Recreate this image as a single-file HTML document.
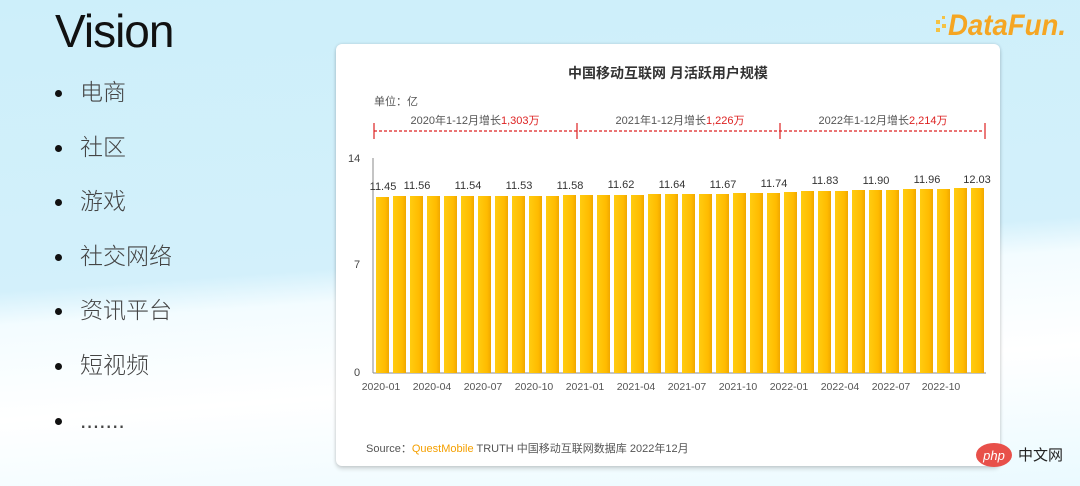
<!DOCTYPE html>
<html><head><meta charset="utf-8"><style>
body{margin:0;width:1080px;height:486px;overflow:hidden;font-family:"Liberation Sans","Noto Sans CJK SC",sans-serif;
background:linear-gradient(176deg,#cdeffa 0%,#d3f0fb 52%,#f3fcff 58%,#ffffff 75%,#eafaff 100%);position:relative}
.t{position:absolute;left:55px;top:4px;font-size:46px;color:#111;letter-spacing:-1px}
ul{position:absolute;left:50px;top:70px;margin:0;padding:0;list-style:none}
li{font-size:23px;color:#444;height:54.6px;line-height:44px;position:relative;padding-left:30px;font-weight:300}
li:before{content:"";position:absolute;left:5px;top:20px;width:7px;height:7px;border-radius:50%;background:#111}
.card{position:absolute;left:336px;top:44px;width:664px;height:422px;background:#fff;box-shadow:0 3px 4px rgba(0,0,0,.14),0 0 3px rgba(0,0,0,.14);border-radius:6px}
</style></head><body>
<div class="t">Vision</div>
<ul><li>电商</li><li>社区</li><li>游戏</li><li>社交网络</li><li>资讯平台</li><li>短视频</li><li>.......</li></ul>
<div class="card"></div>
<svg style="position:absolute;left:0;top:0" width="1080" height="486" font-family="Liberation Sans,Noto Sans CJK SC,sans-serif">
<text x="668" y="78" font-size="14" font-weight="bold" fill="#333" text-anchor="middle">中国移动互联网 月活跃用户规模</text>
<text x="374" y="105" font-size="11" fill="#555">单位：亿</text>
<g font-size="11" fill="#555" text-anchor="middle">
<text x="475" y="124">2020年1-12月增长<tspan fill="#d22">1,303万</tspan></text>
<text x="680" y="124">2021年1-12月增长<tspan fill="#d22">1,226万</tspan></text>
<text x="883" y="124">2022年1-12月增长<tspan fill="#d22">2,214万</tspan></text></g>
<g stroke="#d22" stroke-width="1.2"><line x1="374" y1="131" x2="984" y2="131" stroke-dasharray="3,2"/>
<line x1="374" y1="123" x2="374" y2="139"/><line x1="577" y1="123" x2="577" y2="139"/><line x1="780" y1="123" x2="780" y2="139"/><line x1="985" y1="123" x2="985" y2="139"/></g>
<g font-size="11" fill="#444"><text x="348" y="162">14</text><text x="354" y="268">7</text><text x="354" y="376">0</text></g>
<line x1="373" y1="158" x2="373" y2="373" stroke="#888"/><line x1="373" y1="373" x2="986" y2="373" stroke="#888"/>
<defs><linearGradient id="g" x1="0" x2="1"><stop offset="0" stop-color="#ffcc10"/><stop offset=".7" stop-color="#ffbb00"/><stop offset="1" stop-color="#f0a800"/></linearGradient></defs>
<g fill="url(#g)">
<rect x="376" y="197" width="13" height="176"/><rect x="393" y="196" width="13" height="177"/><rect x="410" y="196" width="13" height="177"/><rect x="427" y="196" width="13" height="177"/><rect x="444" y="196" width="13" height="177"/><rect x="461" y="196" width="13" height="177"/><rect x="478" y="196" width="13" height="177"/><rect x="495" y="196" width="13" height="177"/><rect x="512" y="196" width="13" height="177"/><rect x="529" y="196" width="13" height="177"/><rect x="546" y="196" width="13" height="177"/><rect x="563" y="195" width="13" height="178"/>
<rect x="580" y="195" width="13" height="178"/><rect x="597" y="195" width="13" height="178"/><rect x="614" y="195" width="13" height="178"/><rect x="631" y="195" width="13" height="178"/><rect x="648" y="194" width="13" height="179"/><rect x="665" y="194" width="13" height="179"/><rect x="682" y="194" width="13" height="179"/><rect x="699" y="194" width="13" height="179"/><rect x="716" y="194" width="13" height="179"/><rect x="733" y="193" width="13" height="180"/><rect x="750" y="193" width="13" height="180"/><rect x="767" y="193" width="13" height="180"/>
<rect x="784" y="192" width="13" height="181"/><rect x="801" y="191" width="13" height="182"/><rect x="818" y="191" width="13" height="182"/><rect x="835" y="191" width="13" height="182"/><rect x="852" y="190" width="13" height="183"/><rect x="869" y="190" width="13" height="183"/><rect x="886" y="190" width="13" height="183"/><rect x="903" y="189" width="13" height="184"/><rect x="920" y="189" width="13" height="184"/><rect x="937" y="189" width="13" height="184"/><rect x="954" y="188" width="13" height="185"/><rect x="971" y="188" width="13" height="185"/></g>
<g font-size="11" fill="#333" text-anchor="middle">
<text x="383" y="190">11.45</text><text x="417" y="189">11.56</text><text x="468" y="189">11.54</text><text x="519" y="189">11.53</text><text x="570" y="189">11.58</text><text x="621" y="188">11.62</text><text x="672" y="188">11.64</text><text x="723" y="188">11.67</text><text x="774" y="187">11.74</text><text x="825" y="184">11.83</text><text x="876" y="184">11.90</text><text x="927" y="183">11.96</text><text x="977" y="183">12.03</text></g>
<g font-size="10.5" fill="#555" text-anchor="middle">
<text x="381" y="390">2020-01</text><text x="432" y="390">2020-04</text><text x="483" y="390">2020-07</text><text x="534" y="390">2020-10</text><text x="585" y="390">2021-01</text><text x="636" y="390">2021-04</text><text x="687" y="390">2021-07</text><text x="738" y="390">2021-10</text><text x="789" y="390">2022-01</text><text x="840" y="390">2022-04</text><text x="891" y="390">2022-07</text><text x="941" y="390">2022-10</text></g>
<text x="366" y="452" font-size="11" fill="#555">Source：<tspan fill="#f5a000">QuestMobile</tspan> TRUTH 中国移动互联网数据库 2022年12月</text>
<text x="948" y="35" font-size="30" font-weight="bold" font-style="italic" fill="#f5a623" textLength="118" lengthAdjust="spacingAndGlyphs">DataFun.</text>
<g fill="#f5c242"><rect x="936" y="20" width="4" height="4"/><rect x="942" y="24" width="4" height="4"/><rect x="936" y="28" width="4" height="4"/><rect x="942" y="16" width="3" height="3"/></g>
<ellipse cx="994" cy="455" rx="18" ry="12" fill="#e8504a"/>
<text x="994" y="460" font-size="13" font-style="italic" fill="#fff" text-anchor="middle">php</text>
<text x="1018" y="460" font-size="15" fill="#222">中文网</text>
</svg>
</body></html>
